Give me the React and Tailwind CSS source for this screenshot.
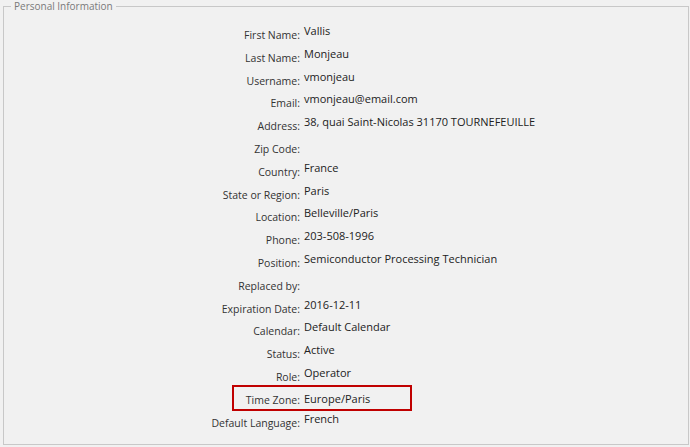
import React from 'react';

const fields = [
  ['First Name', 'Vallis'],
  ['Last Name', 'Monjeau'],
  ['Username', 'vmonjeau'],
  ['Email', 'vmonjeau@email.com'],
  ['Address', '38, quai Saint-Nicolas 31170 TOURNEFEUILLE'],
  ['Zip Code', ''],
  ['Country', 'France'],
  ['State or Region', 'Paris'],
  ['Location', 'Belleville/Paris'],
  ['Phone', '203-508-1996'],
  ['Position', 'Semiconductor Processing Technician'],
  ['Replaced by', ''],
  ['Expiration Date', '2016-12-11'],
  ['Calendar', 'Default Calendar'],
  ['Status', 'Active'],
  ['Role', 'Operator'],
  ['Time Zone', 'Europe/Paris', true],
  ['Default Language', 'French'],
];

const App = () => {
  return (
    <div className="w-[690px] h-[447px] bg-[#f1f1f1] overflow-hidden" style={{ fontFamily: '"Open Sans", "Noto Sans", sans-serif' }}>
      <fieldset className="ml-[3px] mr-[1px] h-[445px] border border-[#c8c8c8] px-0 pt-[11px]">
        <legend className="ml-[7px] px-[3px] text-[10px] leading-[12px] text-[#7a7a7a]">Personal Information</legend>
        <div className="flex flex-col">
          {fields.map(([label, value, highlight]) => (
            <div key={label} className="relative flex h-[22.8px]">
              {highlight && (
                <span className="absolute left-[228px] top-[-3px] w-[180px] h-[26px] border-2 border-[#c00000]" />
              )}
              <div className="w-[296px] shrink-0 text-right text-[10.5px] leading-[14px] pt-[5px] text-[#333]">{label}:</div>
              <div className={`pl-[4px] text-[11px] leading-[15px] text-[#222] ${highlight ? 'pt-[3px]' : ''}`}>{value}</div>
            </div>
          ))}
        </div>
      </fieldset>
    </div>
  );
};

export default App;
